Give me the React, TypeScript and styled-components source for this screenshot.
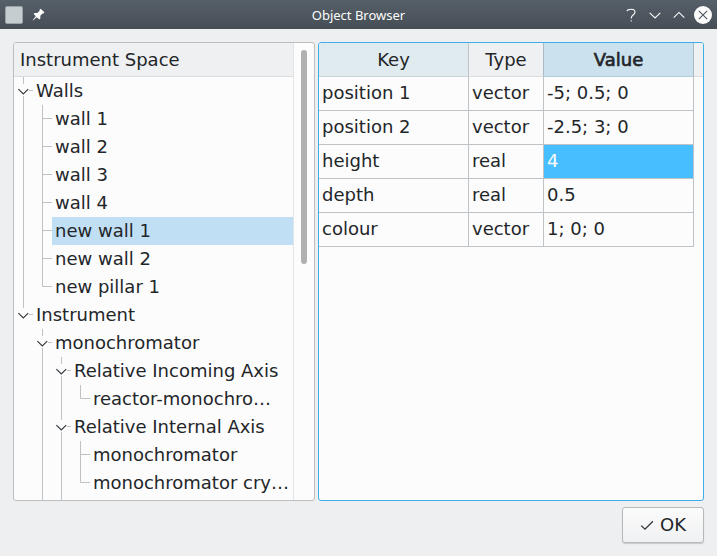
import React from "react";
import styled, { createGlobalStyle, css } from "styled-components";

const GlobalStyle = createGlobalStyle`
  * { box-sizing: border-box; }
  body { margin: 0; background: #eff0f1; overflow: hidden; }
`;

const Dialog = styled.div`
  display: flex;
  flex-direction: column;
  width: 717px;
  height: 556px;
  background: #eeeff1;
  color: #232629;
  font: 18px "DejaVu Sans", sans-serif;
`;

const TitleBar = styled.header`
  flex: none;
  display: grid;
  grid-template-columns: 1fr auto 1fr;
  align-items: center;
  height: 29px;
  padding: 0 5px;
  background: linear-gradient(#566069, #464d55);
  color: #fcfcfc;
`;

const TitleGroup = styled.div<{ $end?: boolean }>`
  display: flex;
  align-items: center;
  height: 28px;
  gap: ${(p) => (p.$end ? 6 : 7)}px;
  justify-content: ${(p) => (p.$end ? "flex-end" : "flex-start")};
`;

const AppIcon = styled.span`
  width: 18px;
  height: 18px;
  border: 1px solid #99a2a6;
  border-radius: 2px;
  background: #c5cdd0;
`;

const Title = styled.h1`
  margin: 0;
  font: 400 13px/28px "Noto Sans", sans-serif;
  white-space: nowrap;
`;

const TitleIcon = styled.svg`
  display: block;
  width: 18px;
  height: 18px;
  fill: none;
  stroke: #fcfcfc;
  stroke-width: 1.1;
`;

const Content = styled.main`
  display: flex;
  gap: 3px;
  height: 459px;
  margin: 13px 13px 0;
`;

const Panel = styled.section<{ $width: number; $focused?: boolean }>`
  display: flex;
  width: ${(p) => p.$width}px;
  border: 1px solid ${(p) => (p.$focused ? "#3daee9" : "#bcbebf")};
  border-radius: 3px;
  background: #fcfcfc;
  overflow: hidden;
`;

const Tree = styled.div`
  display: flex;
  flex-direction: column;
  width: 279px;
`;

const TreeHeader = styled.div`
  flex: none;
  height: 34px;
  padding-left: 6px;
  border-bottom: 1px solid #dadcdd;
  background: #eff0f1;
  line-height: 33px;
`;

const TreeRow = styled.div`
  flex: none;
  display: flex;
  height: 28px;
`;

const Guide = styled.svg`
  flex: none;
  width: 19px;
  height: 28px;
  fill: none;
  stroke: #bfc1c2;
`;

const TreeLabel = styled.span<{ $selected?: boolean }>`
  flex: 1;
  padding-left: 3px;
  white-space: nowrap;
  line-height: 27px;
  background: ${(p) => (p.$selected ? "#c1dff4" : "transparent")};
`;

const ScrollTrack = styled.div`
  width: 21px;
  padding: 7px 0 0 7px;
  border-left: 1px solid #e2e4e5;
`;

const ScrollThumb = styled.div`
  width: 6px;
  height: 214px;
  border-radius: 3px;
  background: #afb0b2;
`;

const Table = styled.div`
  flex: 1;
  display: flex;
  flex-direction: column;
`;

const TableRow = styled.div`
  display: grid;
  grid-template-columns: 150px 75px 150px 1fr;
  height: 34px;
`;

const Cell = styled.div<{ $selected?: boolean }>`
  padding-left: 3px;
  border-right: 1px solid #bec3c7;
  border-bottom: 1px solid #bec3c7;
  line-height: 32px;
  white-space: nowrap;
  ${(p) =>
    p.$selected &&
    css`
      background: #46beff;
      color: #fcfcfc;
    `}
`;

type HeaderTone = "tinted" | "plain" | "active";

const headerTones = {
  tinted: css`
    background: #dfebef;
    border-color: #bdc5ca #bdc5ca #ccd6da;
  `,
  plain: css`
    background: #eff0f1;
    border-color: #a9bac4 #a9bac4 #dadcdd;
  `,
  active: css`
    background: #cbe2ee;
    border-color: #a9bac4 #a9bac4 #b1cddb;
    -webkit-text-stroke: 0.65px #232629;
  `,
};

const HeaderCell = styled.div<{ $tone: HeaderTone }>`
  border-style: solid;
  border-width: 0 1px 1px 0;
  text-align: center;
  line-height: 33px;
  ${(p) => headerTones[p.$tone]}
`;

const HeaderFiller = styled.div`
  border-bottom: 1px solid #dadcdd;
  background: #eff0f1;
`;

const Footer = styled.footer`
  display: flex;
  justify-content: flex-end;
  padding: 6px 13px 0 0;
`;

const OkButton = styled.button`
  display: flex;
  align-items: center;
  gap: 5px;
  width: 82px;
  height: 36px;
  padding: 0 0 1px 15px;
  border: 1px solid #b6b9ba;
  border-radius: 3px;
  background: linear-gradient(#fbfbfc, #f0f1f2);
  box-shadow: 0 1px 1px rgba(0, 0, 0, 0.16);
  color: inherit;
  font: inherit;
`;

const CheckIcon = styled.svg`
  flex: none;
  width: 17px;
  height: 18px;
  fill: none;
  stroke: #31363b;
  stroke-width: 1.3;
`;

type GuideKind = "line" | "blank" | "tee" | "corner" | "open" | "openLast";

const guidePaths: Record<GuideKind, string> = {
  line: "M9.5 0V28",
  blank: "",
  tee: "M9.5 0V28M10 13.5H19",
  corner: "M9.5 0V13.5H19",
  open: "M9.5 0V7M9.5 19V28M15 13.5H19",
  openLast: "M9.5 0V7M15 13.5H19",
};

function GuideCell({ kind }: { kind: GuideKind }) {
  return (
    <Guide viewBox="0 0 19 28">
      <path d={guidePaths[kind]} />
      {kind.startsWith("open") && (
        <path d="M4.4 12.2L9.3 17L14.2 12.2" stroke="#31363b" strokeWidth="1.1" />
      )}
    </Guide>
  );
}

interface Node {
  label: string;
  guides: GuideKind[];
  selected?: boolean;
}

const nodes: Node[] = [
  { label: "Walls", guides: ["open"] },
  { label: "wall 1", guides: ["line", "tee"] },
  { label: "wall 2", guides: ["line", "tee"] },
  { label: "wall 3", guides: ["line", "tee"] },
  { label: "wall 4", guides: ["line", "tee"] },
  { label: "new wall 1", guides: ["line", "tee"], selected: true },
  { label: "new wall 2", guides: ["line", "tee"] },
  { label: "new pillar 1", guides: ["line", "corner"] },
  { label: "Instrument", guides: ["openLast"] },
  { label: "monochromator", guides: ["blank", "open"] },
  { label: "Relative Incoming Axis", guides: ["blank", "line", "open"] },
  { label: "reactor-monochro…", guides: ["blank", "line", "line", "corner"] },
  { label: "Relative Internal Axis", guides: ["blank", "line", "open"] },
  { label: "monochromator", guides: ["blank", "line", "line", "tee"] },
  { label: "monochromator cry…", guides: ["blank", "line", "line", "corner"] },
  { label: "", guides: ["blank", "line", "line"] },
];

const properties = [
  { key: "position 1", type: "vector", value: "-5; 0.5; 0" },
  { key: "position 2", type: "vector", value: "-2.5; 3; 0" },
  { key: "height", type: "real", value: "4", selected: true },
  { key: "depth", type: "real", value: "0.5" },
  { key: "colour", type: "vector", value: "1; 0; 0" },
];

export default function App() {
  return (
    <>
      <GlobalStyle />
      <Dialog>
        <TitleBar>
          <TitleGroup>
            <AppIcon />
            <TitleIcon viewBox="0 0 18 18">
              <path
                d="M10.6 2.8L14.4 6.3L13.4 7.6L12.5 7.4L10.3 9.8L10.4 12.3L9.3 13.4L6.7 11.2L3 14.5L2.7 14.2L5.7 10.2L3.6 7.8L4.7 6.9L7.3 7L9.7 4.7L9.5 3.8Z"
                fill="#fcfcfc"
                stroke="none"
              />
            </TitleIcon>
          </TitleGroup>
          <Title>Object Browser</Title>
          <TitleGroup $end>
            <TitleIcon viewBox="0 0 18 18">
              <path d="M5 5.2Q5.6 3.3 9 3.3Q13 3.3 13 6.2C13 9 9.2 8.6 9.2 12.4M9.2 14.2V15.6" />
            </TitleIcon>
            <TitleIcon viewBox="0 0 18 18">
              <path d="M3.7 6.8L9 12L14.3 6.8" />
            </TitleIcon>
            <TitleIcon viewBox="0 0 18 18">
              <path d="M3.7 11.6L9 6.4L14.3 11.6" />
            </TitleIcon>
            <TitleIcon viewBox="0 0 18 18">
              <circle cx="9" cy="9" r="9" fill="#fcfcfc" stroke="none" />
              <path d="M4.8 4.8L13.2 13.2M13.2 4.8L4.8 13.2" stroke="#4d565f" />
            </TitleIcon>
          </TitleGroup>
        </TitleBar>
        <Content>
          <Panel $width={302}>
            <Tree>
              <TreeHeader>Instrument Space</TreeHeader>
              {nodes.map((node, i) => (
                <TreeRow key={i}>
                  {node.guides.map((kind, j) => (
                    <GuideCell key={j} kind={kind} />
                  ))}
                  <TreeLabel $selected={node.selected}>{node.label}</TreeLabel>
                </TreeRow>
              ))}
            </Tree>
            <ScrollTrack>
              <ScrollThumb />
            </ScrollTrack>
          </Panel>
          <Panel $width={386} $focused>
            <Table>
              <TableRow>
                <HeaderCell $tone="tinted">Key</HeaderCell>
                <HeaderCell $tone="plain">Type</HeaderCell>
                <HeaderCell $tone="active">Value</HeaderCell>
                <HeaderFiller />
              </TableRow>
              {properties.map((p) => (
                <TableRow key={p.key}>
                  <Cell>{p.key}</Cell>
                  <Cell>{p.type}</Cell>
                  <Cell $selected={p.selected}>{p.value}</Cell>
                </TableRow>
              ))}
            </Table>
          </Panel>
        </Content>
        <Footer>
          <OkButton>
            <CheckIcon viewBox="0 0 17 18">
              <path d="M3.2 9.6L7 13.2L14.9 5.3" />
            </CheckIcon>
            OK
          </OkButton>
        </Footer>
      </Dialog>
    </>
  );
}
